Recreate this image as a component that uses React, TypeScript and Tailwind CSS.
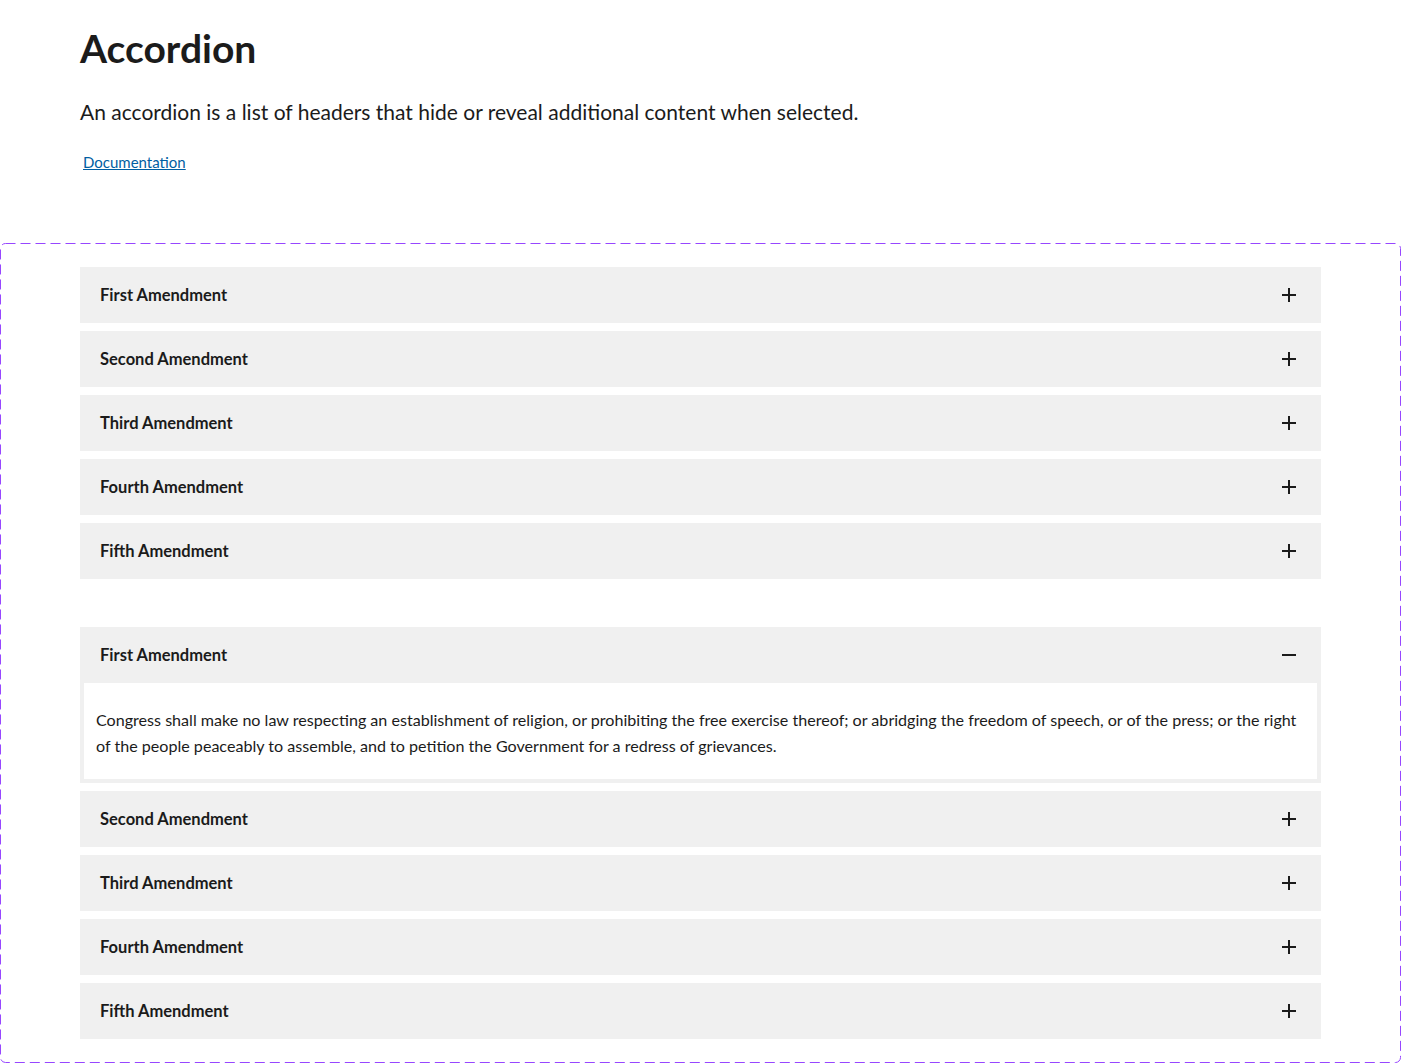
import { useState } from "react";

const items = [
  {
    title: "First Amendment",
    body: "Congress shall make no law respecting an establishment of religion, or prohibiting the free exercise thereof; or abridging the freedom of speech, or of the press; or the right of the people peaceably to assemble, and to petition the Government for a redress of grievances.",
  },
  { title: "Second Amendment", body: "A well regulated Militia, being necessary to the security of a free State, the right of the people to keep and bear Arms, shall not be infringed." },
  { title: "Third Amendment", body: "No Soldier shall, in time of peace be quartered in any house, without the consent of the Owner, nor in time of war, but in a manner to be prescribed by law." },
  { title: "Fourth Amendment", body: "The right of the people to be secure in their persons, houses, papers, and effects, against unreasonable searches and seizures, shall not be violated." },
  { title: "Fifth Amendment", body: "No person shall be held to answer for a capital, or otherwise infamous crime, unless on a presentment or indictment of a Grand Jury." },
];

function PlusMinus({ open }: { open: boolean }) {
  return (
    <svg width="16" height="16" viewBox="0 0 16 16" className="text-[#1b1b1b]">
      <rect x="1" y="7" width="14" height="2" fill="currentColor" />
      {!open && <rect x="7" y="1" width="2" height="14" fill="currentColor" />}
    </svg>
  );
}

function Accordion({ initial }: { initial: number | null }) {
  const [open, setOpen] = useState<number | null>(initial);

  return (
    <div className="flex flex-col gap-2">
      {items.map((item, i) => {
        const isOpen = open === i;
        return (
          <div key={item.title}>
            <button
              onClick={() => setOpen(isOpen ? null : i)}
              className="w-full h-14 bg-[#f0f0f0] flex items-center justify-between pl-5 pr-6 text-left"
            >
              <span className="text-[16.5px] font-bold text-[#1b1b1b]">{item.title}</span>
              <PlusMinus open={isOpen} />
            </button>
            {isOpen && (
              <div className="border-4 border-t-0 border-[#f0f0f0] bg-white px-3 pt-6 pb-5 text-[16.1px] leading-[26px] text-[#1b1b1b]">
                {item.body}
              </div>
            )}
          </div>
        );
      })}
    </div>
  );
}

export default function App() {
  return (
    <div className="min-h-screen bg-white font-['Lato',sans-serif] text-[#1b1b1b]">
      <div className="px-20 pt-[26px]">
        <h1 className="text-[39px] leading-[44px] font-bold">Accordion</h1>
        <p className="mt-[28px] text-[21px] leading-[28px]">
          An accordion is a list of headers that hide or reveal additional content when selected.
        </p>
        <a href="#" className="inline-block mt-[25px] ml-[3px] text-[15px] text-[#005ea2] underline">
          Documentation
        </a>
      </div>

      <div className="relative mt-[69px] px-20 pt-6 pb-6 flex flex-col gap-12">
        <svg className="absolute inset-0 w-full h-full pointer-events-none">
          <rect
            x="0.5"
            y="0.5"
            rx="5"
            className="[width:calc(100%-1px)] [height:calc(100%-1px)]"
            fill="none"
            stroke="#9747ff"
            strokeWidth="1"
            strokeDasharray="10 5"
          />
        </svg>
        <Accordion initial={null} />
        <Accordion initial={0} />
      </div>
    </div>
  );
}
